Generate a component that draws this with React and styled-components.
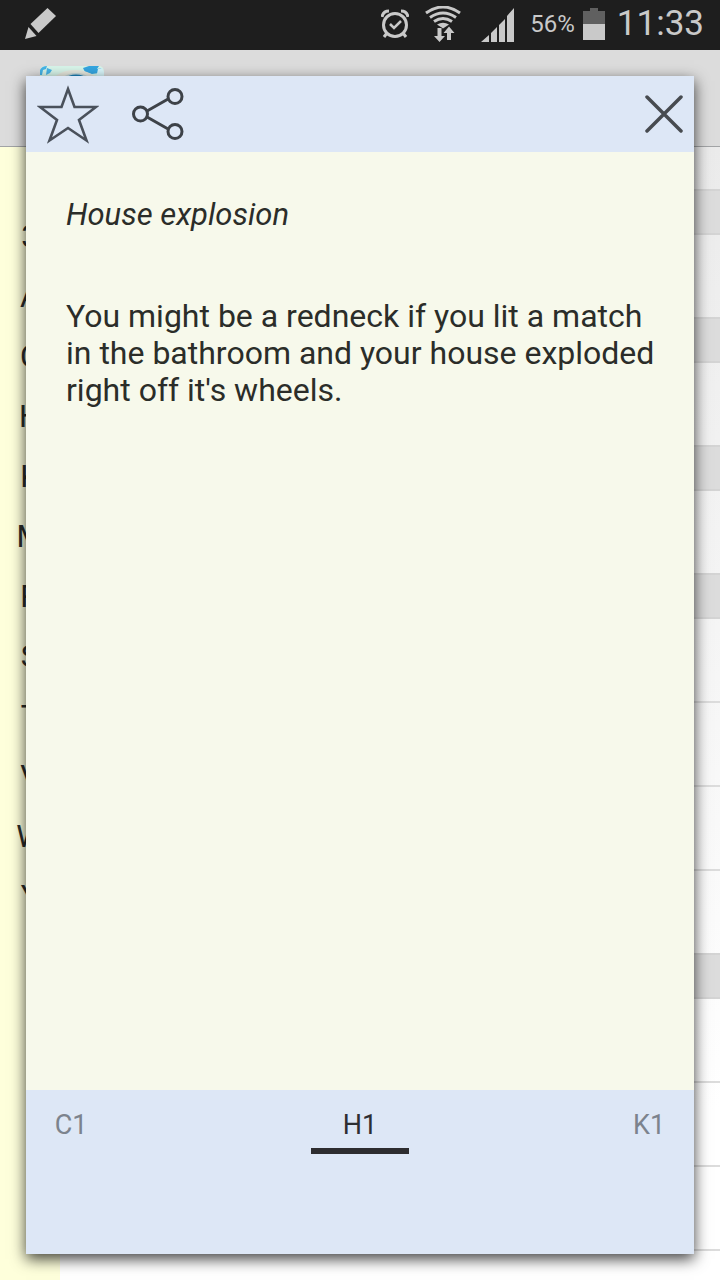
import React from "react";
import styled, { createGlobalStyle } from "styled-components";

const GlobalStyle = createGlobalStyle`
  * { box-sizing: border-box; }
  html, body { margin: 0; padding: 0; }
  body { font-family: Roboto, "Liberation Sans", sans-serif; color: #2b2d29; background: #fff; }
  button { font: inherit; color: inherit; background: none; border: 0; padding: 0; margin: 0; cursor: pointer; }
`;

const Screen = styled.div`
  position: relative;
  display: flex;
  flex-direction: column;
  height: 100vh;
  overflow: hidden;
`;

const StatusBar = styled.header`
  display: flex;
  align-items: center;
  justify-content: space-between;
  flex: none;
  height: 50px;
  padding: 0 16px 2px 24px;
  background: #1e1e1e;
  color: #c9c9c9;
  svg { display: block; }
`;

const StatusGroup = styled.div`
  display: flex;
  align-items: center;
`;

const StatusIcon = styled.span`
  margin-right: ${(p) => p.$gap}px;
`;

const Percent = styled.span`
  font-size: 24px;
  line-height: 48px;
  margin-right: 8px;
`;

const Clock = styled.span`
  font-size: 35px;
  line-height: 48px;
`;

const AppBar = styled.div`
  flex: none;
  height: 97px;
  padding: 16px 40px;
  background: #dcdcdc;
  border-bottom: 1px solid #a2a4a6;
  svg { display: block; }
`;

const Main = styled.main`
  display: flex;
  flex: 1;
  min-height: 0;
`;

const IndexList = styled.nav`
  display: flex;
  flex-direction: column;
  flex: none;
  width: 60px;
  padding-top: 60px;
  background: #feffdb;
`;

const IndexLetter = styled.button`
  flex: none;
  height: 60px;
  font-size: 31px;
  line-height: 60px;
  text-align: center;
`;

const List = styled.div`
  flex: 1;
  overflow: hidden;
  background: linear-gradient(#ebebeb, #fff 85%);
`;

const SectionHeader = styled.div`
  height: 46px;
  background: #dcdcdc;
  border: solid #d4d4d4;
  border-width: 2px 0;
`;

const ListRow = styled.div`
  height: ${(p) => (p.$partial ? 42 : p.$divided ? 84 : 82)}px;
  border-bottom: ${(p) => (p.$divided ? "2px solid #dcdcdc" : "0")};
`;

const Overlay = styled.div`
  position: absolute;
  inset: 76px 26px 26px;
  display: flex;
`;

const Dialog = styled.section`
  display: flex;
  flex-direction: column;
  flex: 1;
  min-width: 0;
  background: #f7f9eb;
  box-shadow: 0 5px 14px rgba(0, 0, 0, 0.75);
`;

const Toolbar = styled.div`
  display: flex;
  align-items: center;
  flex: none;
  height: 76px;
  padding: 0 8px;
  background: #dde7f6;
`;

const ToolButton = styled.button`
  display: flex;
  justify-content: center;
  width: ${(p) => p.$width}px;
  margin-left: ${(p) => (p.$end ? "auto" : "0")};
  svg { display: block; }
`;

const Content = styled.div`
  flex: 1;
  padding: 44px 32px 44px 40px;
  font-size: 32px;
  line-height: 37px;
`;

const Title = styled.h1`
  margin: 0 0 65px;
  font-size: 31px;
  font-weight: 400;
  font-style: italic;
`;

const Joke = styled.p`
  margin: 0;
`;

const Tabs = styled.nav`
  display: flex;
  justify-content: space-between;
  align-items: flex-start;
  flex: none;
  height: 164px;
  background: #dde7f6;
`;

const Tab = styled.button`
  width: ${(p) => (p.$active ? 98 : 90)}px;
  height: 64px;
  padding: 8px 4px 0;
  font-size: 27px;
  line-height: 54px;
  text-align: center;
  color: ${(p) => (p.$active ? "#2d2f33" : "#7c838d")};
  border-bottom: 6px solid ${(p) => (p.$active ? "#2d2d30" : "transparent")};
`;

const SECTIONS = [1, 1, 1, 4, 4];
const LETTERS = ["3", "A", "C", "H", "K", "M", "P", "S", "T", "V", "W", "Y"];
const TABS = ["C1", "H1", "K1"];

const PencilIcon = () => (
  <svg width="32" height="34" viewBox="0 0 32 34" fill="#c9c9c9">
    <path d="M23.500 1l8.500 8-17.500 17-8-9z" />
    <path d="M4.500 20l8 9L1 32z" />
  </svg>
);

const AlarmIcon = () => (
  <svg width="28" height="30" viewBox="0 0 28 30" fill="none" stroke="#c9c9c9" strokeWidth="3">
    <circle cx="14" cy="16" r="11.500" />
    <path d="M9 15l4 4 7-7" strokeWidth="2.500" />
    <path d="M1 8Q2 2 8 2M27 8q-1-6-7-6M6 24l-3 4M22 24l3 4" />
  </svg>
);

const WifiIcon = () => (
  <svg width="36" height="36" viewBox="0 0 36 36">
    <g fill="none" stroke="#c9c9c9" strokeWidth="3">
      <path d="M1 7Q18-5 35 7" />
      <path d="M5 11.500q13-9 26 0" />
      <path d="M9 15.500q9-6 18 0" />
    </g>
    <path d="M12 18.500q6-3.500 12 0l-6 4z" fill="#c9c9c9" />
    <path d="M12.500 22h4v8h3.500l-5.500 6L9 30h3.500zM22 34h4v-7h3.500L24 20.500 18.500 27H22z" fill="#c9c9c9" stroke="#1e1e1e" strokeWidth="1" paintOrder="stroke" />
  </svg>
);

const SignalIcon = () => (
  <svg width="33" height="36" viewBox="0 0 33 36" fill="#c9c9c9">
    <path d="M0 36l8-7v7zM10 27l6-6v15h-6zM18 19l6-6v23h-6zM26 10l7-8v34h-7z" />
  </svg>
);

const BatteryIcon = () => (
  <svg width="22" height="32" viewBox="0 0 22 32">
    <path d="M7 0h8v3h7v13H0V3h7z" fill="#606060" />
    <path d="M0 16h22v16H0z" fill="#c9c9c9" />
  </svg>
);

const AppLogo = () => (
  <svg width="64" height="64" viewBox="0 0 64 64">
    <rect width="64" height="64" rx="5" fill="#d8f5ea" />
    <path d="M0 9V4q2-4 7-4l-1 3-3 1-1 5zM7 2l5 2-2 3-4 2z" fill="#45b4e8" />
    <path d="M43 2l6-2h10l-2 3 5-1-3 5-7 1-7-2z" fill="#35a7e2" />
    <path d="M58 3l4-1 2 4v6h-8z" fill="#d9f7fc" />
    <ellipse cx="35" cy="22" rx="26" ry="18" fill="#e7e9df" />
    <ellipse cx="36" cy="25" rx="20" ry="18" fill="#c5d9dc" />
    <ellipse cx="36" cy="26" rx="18" ry="17.500" fill="#1c82b9" />
  </svg>
);

const StarIcon = () => (
  <svg width="62" height="60" viewBox="0 0 62 60" fill="none" stroke="#4a515b" strokeWidth="2.600">
    <path d="M31 5l6.500 18H59L42 36l7.500 20.500L31 44 12.500 56.500 20 36 3 23h21.500z" />
  </svg>
);

const ShareIcon = () => (
  <svg width="52" height="52" viewBox="0 0 52 52" fill="none" stroke="#3d4248" strokeWidth="3">
    <circle cx="8.500" cy="26" r="7" />
    <circle cx="43" cy="8.500" r="7" />
    <circle cx="43" cy="43.500" r="7" />
    <path d="M15 23l22-12.500M15 29l22 12.500" />
  </svg>
);

const CloseIcon = () => (
  <svg width="38" height="38" viewBox="0 0 38 38" fill="none" stroke="#474b50" strokeWidth="3.500" strokeLinecap="round">
    <path d="M2 2l34 34M36 2L2 36" />
  </svg>
);

export default function App() {
  return (
    <Screen>
      <GlobalStyle />
      <StatusBar>
        <PencilIcon />
        <StatusGroup>
          <StatusIcon $gap={16}><AlarmIcon /></StatusIcon>
          <StatusIcon $gap={20}><WifiIcon /></StatusIcon>
          <StatusIcon $gap={16}><SignalIcon /></StatusIcon>
          <Percent>56%</Percent>
          <StatusIcon $gap={12}><BatteryIcon /></StatusIcon>
          <Clock>11:33</Clock>
        </StatusGroup>
      </StatusBar>
      <AppBar><AppLogo /></AppBar>
      <Main>
        <IndexList aria-label="Index">
          {LETTERS.map((l) => <IndexLetter key={l}>{l}</IndexLetter>)}
        </IndexList>
        <List>
          <ListRow $partial />
          {SECTIONS.map((count, s) => (
            <React.Fragment key={s}>
              <SectionHeader />
              {Array.from({ length: count }, (_, i) => (
                <ListRow key={i} $divided={i < count - 1} />
              ))}
            </React.Fragment>
          ))}
        </List>
      </Main>
      <Overlay>
        <Dialog role="dialog" aria-labelledby="joke-title">
          <Toolbar>
            <ToolButton $width={68} aria-label="Favourite"><StarIcon /></ToolButton>
            <ToolButton $width={112} aria-label="Share"><ShareIcon /></ToolButton>
            <ToolButton $width={44} $end aria-label="Close"><CloseIcon /></ToolButton>
          </Toolbar>
          <Content>
            <Title id="joke-title">House explosion</Title>
            <Joke>
              You might be a redneck if you lit a match in the bathroom and your house exploded right off it's wheels.
            </Joke>
          </Content>
          <Tabs aria-label="Jokes">
            {TABS.map((t) => <Tab key={t} $active={t === "H1"}>{t}</Tab>)}
          </Tabs>
        </Dialog>
      </Overlay>
    </Screen>
  );
}
